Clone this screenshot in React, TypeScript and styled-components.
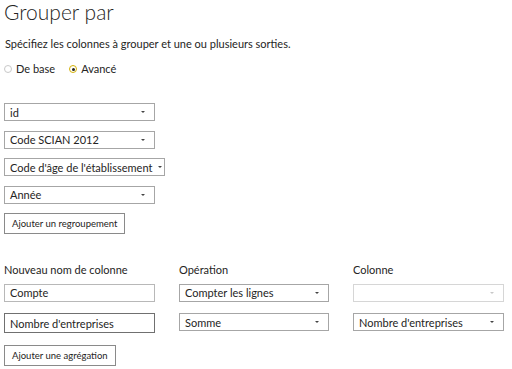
import { createGlobalStyle } from "styled-components";
import styled from "styled-components";

const GlobalStyle = createGlobalStyle`
  html, body {
    margin: 0;
    padding: 0;
    background: #ffffff;
  }
  body {
    font-family: Lato, "Noto Sans", sans-serif;
    color: #252423;
  }
`;

const Page = styled.div`
  width: 512px;
  height: 369px;
  overflow: hidden;
  padding: 0 4px;
  box-sizing: border-box;
`;

const Title = styled.h1`
  margin: 0;
  font-size: 21px;
  line-height: 24px;
  font-weight: 300;
  color: #252423;
`;

const Subtitle = styled.p`
  margin: 12px 0 0 1px;
  font-size: 11px;
  line-height: 16px;
`;

const RadioRow = styled.div`
  display: flex;
  gap: 14px;
  margin-top: 10px;
  font-size: 11px;
  line-height: 14px;
`;

const RadioLabel = styled.label`
  display: flex;
  align-items: center;
  gap: 4px;
`;

const RadioDot = styled.span<{ $checked?: boolean }>`
  box-sizing: border-box;
  width: 8px;
  height: 8px;
  border-radius: 50%;
  border: 1px solid ${(p) => (p.$checked ? "#d4b106" : "#c8c8c8")};
  display: flex;
  align-items: center;
  justify-content: center;

  &::after {
    content: "";
    width: 3px;
    height: 3px;
    border-radius: 50%;
    background: ${(p) => (p.$checked ? "#252423" : "transparent")};
  }
`;

const GroupList = styled.div`
  display: flex;
  flex-direction: column;
  align-items: flex-start;
  gap: 9.5px;
  margin-top: 27px;
`;

const SelectBox = styled.div<{ $width?: number; $disabled?: boolean }>`
  box-sizing: border-box;
  width: ${(p) => (p.$width ? `${p.$width}px` : "100%")};
  height: 18px;
  border: 1px solid ${(p) => (p.$disabled ? "#d6d6d6" : "#a6a6a6")};
  display: flex;
  align-items: center;
  justify-content: space-between;
  padding: 0 9px 0 5px;
  font-size: 11px;
  white-space: nowrap;
  background: #fff;
`;

const Caret = styled.span<{ $disabled?: boolean }>`
  width: 0;
  height: 0;
  border-left: 2.5px solid transparent;
  border-right: 2.5px solid transparent;
  border-top: 2.5px solid ${(p) => (p.$disabled ? "#c8c8c8" : "#444")};
  margin-left: 6px;
`;

const Button = styled.button`
  box-sizing: border-box;
  height: 21px;
  padding: 0 7px;
  border: 1px solid #8a8a8a;
  background: #fff;
  font-family: Lato, "Noto Sans", sans-serif;
  font-size: 9.5px;
  color: #252423;
  cursor: pointer;
`;

const AggGrid = styled.div`
  display: grid;
  grid-template-columns: 151px 150px 151px;
  column-gap: 24px;
  row-gap: 11.5px;
  margin-top: 29px;
  align-items: start;
`;

const ColLabel = styled.div`
  font-size: 11px;
  line-height: 14px;
  margin-bottom: -5px;
  color: #252423;
`;

const TextInput = styled.div<{ $active?: boolean }>`
  box-sizing: border-box;
  height: ${(p) => (p.$active ? "20px" : "18px")};
  border: 1px solid ${(p) => (p.$active ? "#707070" : "#b8b8b8")};
  display: flex;
  align-items: center;
  padding: 0 5px;
  font-size: 11px;
  white-space: nowrap;
`;

const Footer = styled.div`
  margin-top: 10px;
`;

function Select({
  value,
  width,
  disabled,
}: {
  value: string;
  width?: number;
  disabled?: boolean;
}) {
  return (
    <SelectBox $width={width} $disabled={disabled}>
      <span>{value}</span>
      <Caret $disabled={disabled} />
    </SelectBox>
  );
}

export default function App() {
  return (
    <Page>
      <GlobalStyle />
      <Title>Grouper par</Title>
      <Subtitle>
        Spécifiez les colonnes à grouper et une ou plusieurs sorties.
      </Subtitle>
      <RadioRow>
        <RadioLabel>
          <RadioDot />
          De base
        </RadioLabel>
        <RadioLabel>
          <RadioDot $checked />
          Avancé
        </RadioLabel>
      </RadioRow>

      <GroupList>
        <Select value="id" width={151} />
        <Select value="Code SCIAN 2012" width={151} />
        <Select value="Code d'âge de l'établissement" width={161} />
        <Select value="Année" width={151} />
        <Button>Ajouter un regroupement</Button>
      </GroupList>

      <AggGrid>
        <ColLabel>Nouveau nom de colonne</ColLabel>
        <ColLabel>Opération</ColLabel>
        <ColLabel>Colonne</ColLabel>

        <TextInput>Compte</TextInput>
        <Select value="Compter les lignes" />
        <Select value="" disabled />

        <TextInput $active>Nombre d'entreprises</TextInput>
        <Select value="Somme" />
        <Select value="Nombre d'entreprises" />
      </AggGrid>

      <Footer>
        <Button>Ajouter une agrégation</Button>
      </Footer>
    </Page>
  );
}
